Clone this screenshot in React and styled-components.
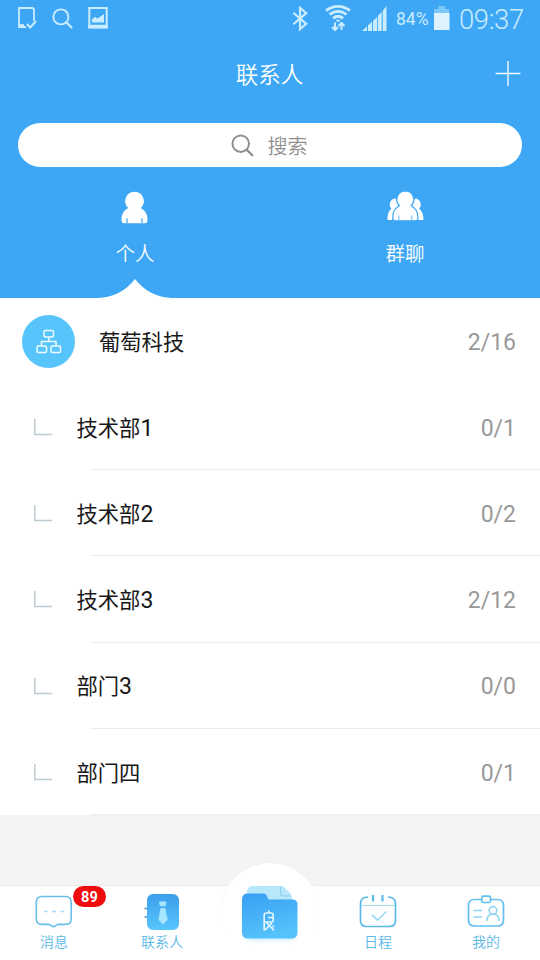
import React from "react";
import styled, { createGlobalStyle } from "styled-components";

const GlobalStyle = createGlobalStyle`
  * { box-sizing: border-box; }
  body {
    margin: 0;
    background: #f4f4f4;
    font-family: Roboto, "Noto Sans CJK SC", sans-serif;
  }
  svg { display: block; flex: none; overflow: visible; }
`;

const Screen = styled.div`
  width: 540px;
  height: 960px;
  display: flex;
  flex-direction: column;
  overflow: hidden;
  background: #f4f4f4;
`;

const Header = styled.header`
  height: 298px;
  flex: none;
  display: flex;
  flex-direction: column;
  background: #3da7f6;
  color: #fff;
`;

const StatusBar = styled.div`
  height: 36px;
  flex: none;
  display: flex;
  align-items: center;
  justify-content: space-between;
  padding: 0 16px 0 17px;
  color: #c9ecff;
`;

const StatusGroup = styled.div`
  height: 36px;
  display: flex;
  align-items: center;
  gap: ${(p) => p.$gap}px;
`;

const Battery = styled.span`
  width: 33px;
  margin: 0 5px 0 9px;
  font-size: 17.5px;
  line-height: 36px;
  padding-top: 1px;
  white-space: nowrap;
`;

const Clock = styled.span`
  width: 65px;
  margin-left: 9px;
  font-size: 27.5px;
  line-height: 38px;
  font-weight: 300;
  letter-spacing: -0.4px;
  padding-top: 3px;
  white-space: nowrap;
`;

const TitleBar = styled.div`
  height: 76px;
  flex: none;
  display: grid;
  grid-template-columns: 60px 1fr 60px;
  align-items: center;
  justify-items: center;
`;

const Title = styled.h1`
  grid-column: 2;
  margin: 0;
  padding: 2px 1px 0 0;
  font-size: 22.5px;
  font-weight: 350;
  line-height: 32px;
`;

const SearchBox = styled.div`
  height: 44px;
  flex: none;
  margin: 11px 18px 0;
  padding-right: 2px;
  display: flex;
  align-items: center;
  justify-content: center;
  gap: 14px;
  border-radius: 22px;
  background: #fff;
  color: #8f8f8f;
  font-size: 20px;
  line-height: 40px;
  font-weight: 350;
`;

const SearchLabel = styled.span`
  padding-top: 3px;
`;

const Tabs = styled.div`
  height: 131px;
  flex: none;
  display: grid;
  grid-template-columns: 1fr 1fr;
`;

const Tab = styled.div`
  display: flex;
  flex-direction: column;
  align-items: center;
  padding-top: 24px;
  font-size: 19.5px;
  line-height: 28px;
  font-weight: 350;
`;

const TabLabel = styled.span`
  margin-top: 17px;
  height: 28px;
`;

const Notch = styled.svg`
  margin-top: 9px;
`;

const List = styled.main`
  height: 517px;
  flex: none;
  background: #fff;
  color: #181818;
`;

const Row = styled.div`
  height: ${(p) => (p.$company ? 86 : 86.2)}px;
  display: flex;
  align-items: center;
  padding-left: ${(p) => (p.$company ? 22 : 33)}px;
  background: ${(p) =>
    p.$company ? "#fff" : "linear-gradient(#ececec, #ececec) 90px 100% / 450px 1px no-repeat"};
`;

const Name = styled.span`
  flex: 1;
  margin-left: ${(p) => p.$indent}px;
  padding-top: 3.4px;
  font-size: 21.3px;
  line-height: 30px;

  b { font-size: 23px; font-weight: 400; }
`;

const Count = styled.span`
  padding: 3.4px 24px 0 0;
  color: #999;
  font-size: 23px;
  line-height: 30px;
`;

const Avatar = styled.div`
  width: 53px;
  height: 53px;
  display: grid;
  place-items: center;
  border-radius: 50%;
  background: #57c5fb;
`;

const Nav = styled.nav`
  height: 75px;
  margin-top: auto;
  display: grid;
  grid-template-columns: repeat(5, 1fr);
  background: #fff;
  border-top: 1px solid #ebebeb;
`;

const NavItem = styled.div`
  position: relative;
  display: flex;
  flex-direction: column;
  align-items: center;
  padding-top: 7px;
  color: #5ab9e8;
  font-size: 14px;
  line-height: 20px;
  font-weight: 350;
`;

const NavLabel = styled.span`
  margin-top: 2px;
`;

const Badge = styled.span`
  position: absolute;
  left: 73px;
  top: 0;
  width: 33px;
  height: 21px;
  border-radius: 11px;
  background: #ee0d0d;
  color: #fff;
  font-size: 14.5px;
  font-weight: 700;
  line-height: 23px;
  text-align: center;
  letter-spacing: 0.3px;
`;

const HomeButton = styled.div`
  position: absolute;
  left: 5px;
  top: -24px;
  width: 98px;
  height: 98px;
  border-radius: 50%;
  background: #fff;
  box-shadow: inset 0 1px 0 #eee;
  display: flex;
  justify-content: center;
  padding-top: 24px;
`;

const NoteIcon = () => (
  <svg width="20" height="24" viewBox="0 0 20 24" fill="none" stroke="currentColor" strokeWidth="1.8">
    <path d="M17 15V4q0-2-2-2H2V21h7" />
    <path d="M2 18.2h5v2.8H2z" fill="currentColor" stroke="none" />
    <path d="M10 18l3.2 3.5L19 15" strokeWidth="2" />
  </svg>
);

const MagnifierIcon = ({ size, stroke }) => (
  <svg width={size} height={size} viewBox="0 0 22 22" fill="none" stroke="currentColor" strokeWidth={stroke}>
    <circle cx="9.3" cy="9.3" r="7.9" />
    <path d="M15 15l6 6" strokeWidth={stroke * 1.15} />
  </svg>
);

const GalleryIcon = () => (
  <svg width="20" height="22" viewBox="0 0 20 22" fill="none" stroke="currentColor">
    <path d="M1.3 1h17.4v17.8H1.3z" strokeWidth="2" />
    <path d="M0 20.3h20" strokeWidth="2.6" />
    <path d="M4 15.5v-3.2l3-2.2 2.5 1.5L16 7v8.5z" fill="currentColor" stroke="none" />
  </svg>
);

const BluetoothIcon = () => (
  <svg width="17" height="25" viewBox="0 0 17 26" fill="none" stroke="currentColor" strokeWidth="2.3">
    <path d="M1 7l13.5 11.5L8 24V2l6.5 5.5L1 19" />
  </svg>
);

const WifiIcon = () => (
  <svg width="26" height="28" viewBox="0 0 26 28" fill="none" stroke="currentColor" strokeWidth="2.8">
    <path d="M1 6.500Q13-1.800 25 6.500M4.500 10.500q8.500-6.500 17 0M8 14.300q5-4 10 0" />
    <path d="M10.500 15.800h5L13 18.500z" fill="currentColor" stroke="none" />
    <path d="M10 18.500v7.500M7 23l3 3 3-3M16.500 26v-7M13.500 22l3-3 3 3" strokeWidth="2" />
  </svg>
);

const SignalIcon = () => (
  <svg width="25" height="25" viewBox="0 0 25 25" fill="currentColor">
    <path d="M0 25l5-4.500V25zM6 19.200l4-3.500V25H6zM11 15l4-3.700V25h-4zM15.800 10l3.900-4V25h-3.900zM20.700 4.800L24.500 0v25h-3.800z" />
  </svg>
);

const BatteryIcon = () => (
  <svg width="16" height="24" viewBox="0 0 16 24" fill="#dff3fc">
    <path d="M4.500 0h6.500v3H15v4H0V3h4.500z" fill="#7cc8fa" />
    <path d="M0 7h15.500v17H0z" />
  </svg>
);

const PersonIcon = () => (
  <svg width="28" height="33" viewBox="0 0 28 33" fill="#fff">
    <path d="M13.500.800a9.300 9.300 0 0 1 6.200 16.200c4.600 2.400 6.800 6.400 6.800 11.300 0 2.400-.8 4-2.300 4H2.800C1.300 32.300.5 30.700.5 28.300c0-4.900 2.200-8.900 6.800-11.300A9.300 9.300 0 0 1 13.500.800z" />
    <path d="M6 32.300v-5M21 32.300v-5" stroke="#3da7f6" strokeWidth="1.200" />
  </svg>
);

const GroupIcon = () => (
  <svg width="37" height="33" viewBox="0 0 37 33" fill="#fff">
    <path d="M8.500 7.500a6 6 0 0 0-4 10.200C1.500 19.500.5 23.500.5 29h4.500L12 14zM28 7.500a6 6 0 0 1 4 10.200C35 19.500 36.500 23.500 36.500 29h-5L25 14z" />
    <path
      d="M18.300 0a8.600 8.600 0 0 1 5.900 14.700c4.200 2.200 6.600 6 6.600 11 0 2.800-.7 4.100-1.800 4.100H7.600c-1.100 0-1.800-1.300-1.800-4.100 0-5 2.400-8.800 6.600-11A8.600 8.600 0 0 1 18.300 0z"
      stroke="#3da7f6"
      strokeWidth="1.200"
    />
    <path d="M11.800 29v-4.500M24.800 29v-4.500" stroke="#3da7f6" strokeWidth=".8" />
  </svg>
);

const Plus = styled.svg`
  margin-right: 5px;
`;

const PlusIcon = () => (
  <Plus width="26" height="26" viewBox="0 0 26 26" stroke="#fff" strokeWidth="1.300">
    <path d="M.5 12.500h25M13 0v25" />
  </Plus>
);

const OrgIcon = () => (
  <svg width="26" height="26" viewBox="0 0 26 26" fill="none" stroke="#edfaff" strokeWidth="1.500">
    <rect x="8" y="2.500" width="9.500" height="6.500" rx="1.200" />
    <rect x="1" y="18" width="9.500" height="6.500" rx="1.200" />
    <rect x="15" y="18" width="9.500" height="6.500" rx="1.200" />
    <path d="M12.800 9v4.500M5.500 18v-4.500h14.500v4.500" />
  </svg>
);

const BranchIcon = () => (
  <svg width="20" height="18" viewBox="0 0 20 18" fill="none" stroke="#bdcbd2" strokeWidth="1.500">
    <path d="M1.800 1v15.500h17.500" />
  </svg>
);

const MessageIcon = () => (
  <svg width="38" height="37" viewBox="0 0 38 37" fill="none" stroke="#68bfe9" strokeWidth="1.600">
    <path d="M7 3.500h23.500q5.700 0 5.700 5.700v16.500q0 5.700-5.700 5.700H23l-4.500 2.500L14 31.400H7q-5.700 0-5.700-5.700V9.200Q1.300 3.500 7 3.500z" />
    <path d="M9 18.500h3.500M17 18.500h4M25.500 18.500h4" stroke="#a6daf2" strokeWidth="1.400" />
  </svg>
);

const ContactsIcon = () => (
  <svg width="38" height="37" viewBox="0 0 38 37" fill="none">
    <defs>
      <linearGradient id="contactsFill" x1="0" y1="0" x2="0" y2="1">
        <stop stopColor="#3b9eea" />
        <stop offset="1" stopColor="#58c6ff" />
      </linearGradient>
    </defs>
    <path d="M1.500 15.500h3M1.500 24h3" stroke="#4c91bd" strokeWidth="1.500" />
    <rect x="4" y="1" width="32" height="36" rx="6" fill="url(#contactsFill)" />
    <path d="M16.500 9h6.500l-.8 3.800h-4.900z" fill="#a6e6ff" stroke="#a6e6ff" strokeLinejoin="round" />
    <path d="M18 15.500h3.800l2.400 11.500-4.300 4-4-4z" fill="#a6e6ff" stroke="#a6e6ff" strokeLinejoin="round" />
  </svg>
);

const CalendarIcon = () => (
  <svg width="38" height="37" viewBox="0 0 38 37" fill="none" stroke="#5bb9e8" strokeWidth="1.700">
    <path d="M9 4q-7.500 0-7.500 7v16.500q0 6 6 6h23q6 0 6-6V11q0-7-7.500-7" />
    <path d="M2 12.500h34" stroke="#a2d8f0" strokeWidth="1.200" />
    <path d="M14 2v6.500M23.500 2v6.500" strokeWidth="2.200" />
    <path d="M13 22l5.500 5L27.500 18.500" stroke="#9cdcf5" />
  </svg>
);

const ProfileIcon = () => (
  <svg width="38" height="37" viewBox="0 0 38 37" fill="none" stroke="#62c1ee" strokeWidth="1.700">
    <path d="M14.500 6.500H7.500q-6 0-6 6v14.500q0 6 6 6h23q6 0 6-6V12.500q0-6-6-6h-7" />
    <rect x="14.800" y="3.200" width="8.700" height="6.300" rx="1.500" />
    <path d="M6.500 17.500h8.500M6.500 24h8.500M20 28q0-7 6-7t6 7" stroke="#92d6f3" />
    <circle cx="26" cy="17.500" r="3.800" stroke="#92d6f3" />
  </svg>
);

const FolderIcon = () => (
  <svg width="60" height="60" viewBox="0 0 60 60" fill="none">
    <defs>
      <linearGradient id="folderFill" x1="0" y1="0" x2=".3" y2="1">
        <stop stopColor="#379ff4" />
        <stop offset="1" stopColor="#55c2fb" />
      </linearGradient>
      <filter id="folderGlow" x="-20%" y="-50%" width="140%" height="200%">
        <feGaussianBlur stdDeviation="2" />
      </filter>
    </defs>
    <rect x="6" y="44" width="48" height="10" rx="5" fill="#8adafb" opacity=".5" filter="url(#folderGlow)" />
    <path d="M12 0h29q2 0 3 1l6 6q2 2 2 5v8H6l1-15q1-5 5-5z" fill="#b7e7fb" />
    <path d="M40.500.5v6.500q0 3 3 3h7" stroke="#88ccef" strokeWidth="1" />
    <path d="M7 7.500h16q3.500 0 4.500 4l1 2h24q5 0 5 5v28q0 6-6 6H8q-6 0-6-6V14q0-6.500 5-6.500z" fill="url(#folderFill)" />
    <path
      d="M28.800 24.500v2.500M24.200 44.500V29q0-2 2-2h5q2 0 2 2v5q0 2-2 2h-7M28 31.500h5M26 36l8 8.500M25 44l7-7M33.200 39.500v2"
      stroke="#e5f8ff"
      strokeWidth="1.600"
    />
  </svg>
);

const departments = [
  { name: "技术部", number: "1", count: "0/1" },
  { name: "技术部", number: "2", count: "0/2" },
  { name: "技术部", number: "3", count: "2/12" },
  { name: "部门", number: "3", count: "0/0" },
  { name: "部门四", number: "", count: "0/1" },
];

export default function App() {
  return (
    <Screen>
      <GlobalStyle />
      <Header>
        <StatusBar>
          <StatusGroup $gap={15}>
            <NoteIcon />
            <MagnifierIcon size={21} stroke={2} />
            <GalleryIcon />
          </StatusGroup>
          <StatusGroup $gap={0}>
            <StatusGroup $gap={16}>
              <BluetoothIcon />
              <StatusGroup $gap={11}>
                <WifiIcon />
                <SignalIcon />
              </StatusGroup>
            </StatusGroup>
            <Battery>84%</Battery>
            <BatteryIcon />
            <Clock>09:37</Clock>
          </StatusGroup>
        </StatusBar>
        <TitleBar>
          <Title>联系人</Title>
          <PlusIcon />
        </TitleBar>
        <SearchBox>
          <MagnifierIcon size={23} stroke={1.9} />
          <SearchLabel>搜索</SearchLabel>
        </SearchBox>
        <Tabs>
          <Tab>
            <PersonIcon />
            <TabLabel>个人</TabLabel>
            <Notch width="74" height="20" viewBox="0 0 74 20">
              <path d="M0 20Q23 19 37 1q14 18 37 19z" fill="#fff" />
            </Notch>
          </Tab>
          <Tab>
            <GroupIcon />
            <TabLabel>群聊</TabLabel>
          </Tab>
        </Tabs>
      </Header>
      <List>
        <Row $company>
          <Avatar>
            <OrgIcon />
          </Avatar>
          <Name $indent={24}>葡萄科技</Name>
          <Count>2/16</Count>
        </Row>
        {departments.map((d) => (
          <Row key={d.name + d.number}>
            <BranchIcon />
            <Name $indent={23.5}>
              {d.name}
              {d.number && <b>{d.number}</b>}
            </Name>
            <Count>{d.count}</Count>
          </Row>
        ))}
      </List>
      <Nav>
        <NavItem>
          <MessageIcon />
          <NavLabel>消息</NavLabel>
          <Badge>89</Badge>
        </NavItem>
        <NavItem>
          <ContactsIcon />
          <NavLabel>联系人</NavLabel>
        </NavItem>
        <NavItem>
          <HomeButton>
            <FolderIcon />
          </HomeButton>
        </NavItem>
        <NavItem>
          <CalendarIcon />
          <NavLabel>日程</NavLabel>
        </NavItem>
        <NavItem>
          <ProfileIcon />
          <NavLabel>我的</NavLabel>
        </NavItem>
      </Nav>
    </Screen>
  );
}
